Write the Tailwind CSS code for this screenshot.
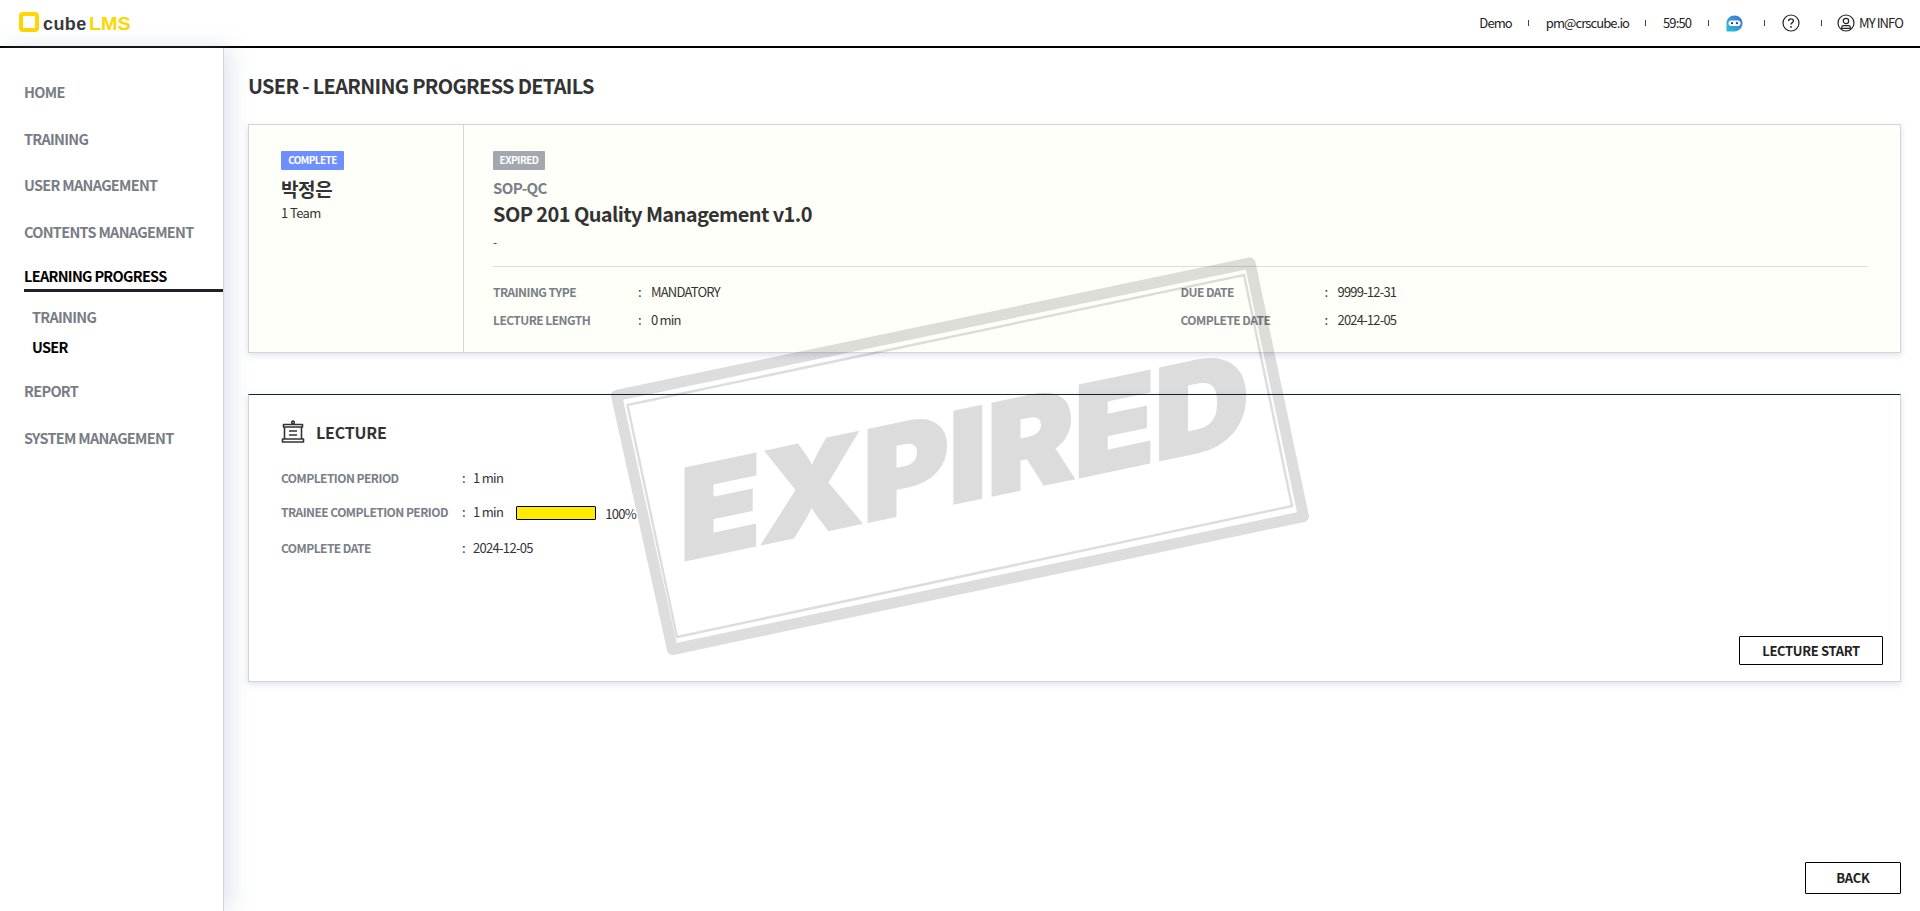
<!DOCTYPE html>
<html lang="en">
<head>
    <meta charset="UTF-8">
    <meta name="viewport" content="width=device-width, initial-scale=1.0">
    <script src="https://cdn.jsdelivr.net/npm/@tailwindcss/browser@4"></script>
    <title>cubeLMS - User Learning Progress Details</title>
</head>
<body class="bg-white font-['Noto_Sans_CJK_KR','Noto_Sans',sans-serif] text-[#333]">
<div class="relative h-[911px] overflow-hidden flex flex-col">

    <!-- header -->
    <header class="h-[48px] shrink-0 border-b-2 border-black flex items-center justify-between pl-[19px] pr-[17px]">
        <div class="flex items-end h-[20px] -mt-[3px]">
            <div class="w-[20px] h-[20px] rounded-[4px] border-[4px] border-[#ffd600]"></div>
            <span class="ml-[4px] font-['Liberation_Sans',sans-serif] font-bold text-[18px] leading-[16px] tracking-[0.4px] text-[#3a3a3a]">cube</span><span class="ml-[2px] origin-left scale-x-110 font-['Liberation_Sans',sans-serif] font-bold text-[18px] leading-[16px] text-[#ffd600]">LMS</span>
        </div>
        <div class="flex items-center text-[13px] tracking-[-0.9px] text-[#222] h-[24px]">
            <span>Demo</span>
            <i class="w-px h-[6px] bg-[#444] ml-[16px] mr-[17px]"></i>
            <span>pm@crscube.io</span>
            <i class="w-px h-[6px] bg-[#444] ml-[16px] mr-[17px]"></i>
            <span>59:50</span>
            <i class="w-px h-[6px] bg-[#444] ml-[17px] mr-[17px]"></i>
            <svg width="17" height="17" viewBox="0 0 17 17">
                <defs><linearGradient id="bot" x1="0" y1="1" x2="1" y2="0"><stop offset="0" stop-color="#2cc3c9"/><stop offset="1" stop-color="#3b6fe0"/></linearGradient></defs>
                <path d="M8.5 0.5C13 0.5 16.5 3.8 16.5 8.3C16.5 13 13 16.5 8.5 16.5H1C0.6 16.5 0.5 16.3 0.5 16V8.3C0.5 3.8 4 0.5 8.5 0.5Z" fill="url(#bot)"/>
                <rect x="2.5" y="5.5" width="12" height="5.5" rx="2.7" fill="#fff"/>
                <circle cx="6" cy="8.2" r="1.1" fill="#27406f"/><circle cx="11" cy="8.2" r="1.1" fill="#27406f"/>
            </svg>
            <i class="w-px h-[6px] bg-[#444] ml-[21px] mr-[17px]"></i>
            <svg width="18" height="18" viewBox="0 0 18 18" fill="none" stroke="#222" stroke-width="1.2">
                <circle cx="9" cy="9" r="8"/>
                <path d="M6.6 7.1C6.6 5.7 7.7 4.9 9 4.9C10.4 4.9 11.4 5.8 11.4 7C11.4 8.6 9 8.7 9 10.6" stroke-width="1.3"/>
                <circle cx="9" cy="12.9" r="0.9" fill="#222" stroke="none"/>
            </svg>
            <i class="w-px h-[6px] bg-[#444] ml-[21px] mr-[15px]"></i>
            <svg width="18" height="18" viewBox="0 0 18 18" fill="none" stroke="#222" stroke-width="1.2">
                <circle cx="9" cy="9" r="8"/>
                <circle cx="9" cy="7" r="2.7"/>
                <path d="M4.7 14.4V13.2C4.7 12 5.6 11.6 6.6 11.6H11.4C12.4 11.6 13.3 12 13.3 13.2V14.4Z"/>
            </svg>
            <span class="ml-[4px]">MY INFO</span>
        </div>
    </header>

    <div class="flex flex-1 min-h-0">
        <!-- sidebar -->
        <aside class="w-[224px] shrink-0 border-r border-[#d0d3d8] shadow-[6px_0_22px_rgba(150,165,195,0.3)] pt-[21px] pl-[24px] text-[14.5px] tracking-[-0.7px] font-bold text-[#787d85] z-10 bg-white">
            <div class="h-[46.5px] flex items-center">HOME</div>
            <div class="h-[46.5px] flex items-center">TRAINING</div>
            <div class="h-[46.5px] flex items-center">USER MANAGEMENT</div>
            <div class="h-[46.5px] flex items-center">CONTENTS MANAGEMENT</div>
            <div class="h-[37px] flex items-center pt-[7px] text-black border-b-[3px] border-[#1f2329]">LEARNING PROGRESS</div>
            <div class="mt-[10px] pl-[8px]">
                <div class="h-[30px] flex items-center">TRAINING</div>
                <div class="h-[30px] flex items-center text-black">USER</div>
            </div>
            <div class="mt-[6px] h-[46.5px] flex items-center">REPORT</div>
            <div class="h-[46.5px] flex items-center">SYSTEM MANAGEMENT</div>
        </aside>

        <!-- main -->
        <main class="flex-1 min-w-0 pl-[24px] pr-[19px] pt-[24px] pb-[17px] flex flex-col">
            <h1 class="h-[28px] flex items-center text-[20px] tracking-[-0.7px] font-bold text-[#333]">USER - LEARNING PROGRESS DETAILS</h1>

            <section class="mt-[24px] h-[229px] flex bg-[#fffff9] border border-[#d6d6d6] shadow-[0_2px_6px_rgba(150,165,195,0.35)]">
                <div class="w-[215px] shrink-0 border-r border-[#d6d6d6] pl-[32px] pt-[26px]">
                    <span class="block w-[63px] h-[19px] rounded-[1px] bg-[#6f8fff] text-white text-[10px] tracking-[-0.6px] font-bold leading-[18px] text-center">COMPLETE</span>
                    <div class="h-[26px] mt-[6px] text-[19px] tracking-[-0.4px] font-bold leading-[26px] text-[#333]">박정은</div>
                    <div class="mt-[2px] text-[13px] tracking-[-0.6px] leading-[18px] text-[#333]">1 Team</div>
                </div>
                <div class="flex-1 pl-[29px] pr-[32px] pt-[26px]">
                    <span class="block w-[52px] h-[19px] rounded-[1px] bg-[#a3a7b0] text-white text-[10px] tracking-[-0.5px] font-bold leading-[18px] text-center">EXPIRED</span>
                    <div class="h-[24px] mt-[6px] text-[15px] tracking-[-0.6px] font-bold leading-[24px] text-[#7b7f88]">SOP-QC</div>
                    <div class="h-[30px] -mt-[1px] text-[20px] tracking-[-0.6px] font-bold leading-[30px] text-[#333]">SOP 201 Quality Management v1.0</div>
                    <div class="h-[18px] mt-[4px] text-[12px] leading-[18px]">-</div>
                    <div class="mt-[15px] border-t border-[#ddd] pt-[16px] grid grid-cols-2 gap-y-[10px] text-[13px] tracking-[-0.8px] leading-[18px]">
                        <div class="flex"><span class="w-[145px] text-[12px] tracking-[-0.55px] font-bold text-[#7b7f88]">TRAINING TYPE</span><span class="w-[13px]">:</span><span>MANDATORY</span></div>
                        <div class="flex"><span class="w-[144px] text-[12px] tracking-[-0.55px] font-bold text-[#7b7f88]">DUE DATE</span><span class="w-[13px]">:</span><span>9999-12-31</span></div>
                        <div class="flex"><span class="w-[145px] text-[12px] tracking-[-0.55px] font-bold text-[#7b7f88]">LECTURE LENGTH</span><span class="w-[13px]">:</span><span>0 min</span></div>
                        <div class="flex"><span class="w-[144px] text-[12px] tracking-[-0.55px] font-bold text-[#7b7f88]">COMPLETE DATE</span><span class="w-[13px]">:</span><span>2024-12-05</span></div>
                    </div>
                </div>
            </section>

            <section class="mt-[41px] h-[288px] bg-white border border-[#d6d6d6] border-t-[#1f2329] shadow-[0_2px_6px_rgba(150,165,195,0.35)] pl-[32px] pr-[17px] pt-[25px] flex flex-col">
                <div class="flex items-center h-[24px]">
                    <svg width="24" height="24" viewBox="0 0 24 24" fill="none" stroke="#333" stroke-width="1.6" stroke-linejoin="round">
                        <path d="M2.5 4.5H21.5V7H2.5Z"/>
                        <path d="M3.5 7V19M20.5 7V19" />
                        <path d="M1.5 19H22.5V22H1.5Z"/>
                        <circle cx="12" cy="2.4" r="1.3"/>
                        <path d="M8 11H16M8 15H16" stroke-width="1.6"/>
                    </svg>
                    <span class="ml-[11px] text-[16px] tracking-[-0.2px] font-bold text-[#333]">LECTURE</span>
                </div>
                <div class="mt-[25px] flex flex-col gap-y-[16px] text-[13px] tracking-[-0.7px] leading-[18px]">
                    <div class="flex"><span class="w-[181px] text-[12px] tracking-[-0.55px] font-bold text-[#7b7f88]">COMPLETION PERIOD</span><span class="w-[11px]">:</span><span>1 min</span></div>
                    <div class="flex"><span class="w-[181px] text-[12px] tracking-[-0.55px] font-bold text-[#7b7f88]">TRAINEE COMPLETION PERIOD</span><span class="w-[11px]">:</span><span>1 min</span>
                        <div class="ml-[13px] mt-[3px] w-[80px] h-[14px] rounded-[1px] border border-black bg-[#ffeb00]"></div>
                        <span class="ml-[9px] mt-[2px]">100%</span>
                    </div>
                    <div class="flex"><span class="w-[181px] text-[12px] tracking-[-0.55px] font-bold text-[#7b7f88]">COMPLETE DATE</span><span class="w-[11px]">:</span><span>2024-12-05</span></div>
                </div>
                <div class="mt-auto mb-[16px] flex justify-end">
                    <button class="w-[144px] h-[29px] border border-black rounded-[1px] bg-white text-[13px] tracking-[-0.35px] font-bold text-[#222]">LECTURE START</button>
                </div>
            </section>

            <div class="mt-auto flex justify-end">
                <button class="w-[96px] h-[32px] border border-black rounded-[1px] bg-white text-[13px] tracking-[-0.2px] font-bold text-[#222]">BACK</button>
            </div>
        </main>
    </div>

    <!-- expired stamp lies over the page -->
    <svg class="absolute inset-0 pointer-events-none z-20" width="1920" height="911" viewBox="0 0 1920 911" fill="none">
        <path d="M616.5 395.5L1250 263L1303.5 516.5L672.5 649.5Z" stroke="#000" stroke-opacity="0.135" stroke-width="11" stroke-linejoin="round"/>
        <path d="M627.5 405L1244 275L1292 506L677 637Z" stroke="#000" stroke-opacity="0.135" stroke-width="2.5" stroke-linejoin="round"/>
        <text transform="translate(680 561) skewY(-11.9)" font-family="Inter, 'Noto Sans', sans-serif" font-weight="900" font-size="125" fill="#000" stroke="#000" stroke-width="3" opacity="0.135" textLength="569" lengthAdjust="spacingAndGlyphs">EXPIRED</text>
    </svg>
</div>
</body>
</html>
